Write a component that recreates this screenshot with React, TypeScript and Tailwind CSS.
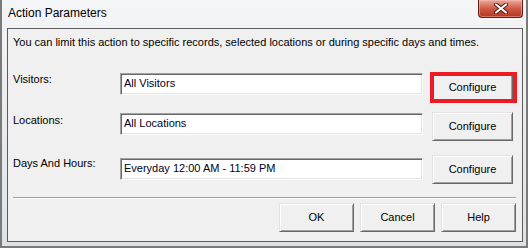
import React from 'react'

const btn =
  'flex items-center justify-center h-[29px] bg-[#f0f0f0] border border-t-[#e3e3e3] border-l-[#e3e3e3] border-b-[#696969] border-r-[#696969] shadow-[inset_1px_1px_0_#ffffff,inset_-1px_-1px_0_#a0a0a0] text-[11px] text-black'

const field =
  'w-[303px] h-[22px] bg-white border border-t-[#a0a0a0] border-l-[#a0a0a0] border-b-white border-r-white shadow-[inset_1px_1px_0_#696969,inset_-1px_-1px_0_#e3e3e3] pl-[3px] pt-[3px] text-[11px] leading-[13px] text-[#000022]'

const CloseButton = () => (
  <div className="w-[45px] h-[18px] rounded-b-[4px] border border-t-0 border-[#6a1d14] bg-gradient-to-b from-[#e9a89c] via-[#cf5a45] to-[#b3331f] shadow-[inset_0_0_0_1px_rgba(255,200,190,0.45)] flex items-center justify-center">
    <svg width="14" height="11" viewBox="0 0 14 11">
      <path d="M2 1.5 L12 9.5 M12 1.5 L2 9.5" stroke="#4a1a12" strokeWidth="4" strokeLinecap="round" />
      <path d="M2 1.5 L12 9.5 M12 1.5 L2 9.5" stroke="#ffffff" strokeWidth="2.2" strokeLinecap="round" />
    </svg>
  </div>
)

const rows = [
  { label: 'Visitors:', value: 'All Visitors', labelTop: 'mt-0', fieldTop: 'mt-0', mark: true, gap: 'mt-[24px]' },
  { label: 'Locations:', value: 'All Locations', labelTop: 'mt-[2px]', fieldTop: 'mt-[1px]', mark: false, gap: 'mt-[10px]' },
  { label: 'Days And Hours:', value: 'Everyday 12:00 AM - 11:59 PM', labelTop: 'mt-[2px]', fieldTop: 'mt-[3px]', mark: false, gap: 'mt-[14px]' },
]

const App = () => {
  return (
    <div
      className="w-[528px] h-[248px] flex flex-col bg-gradient-to-b from-[#f4f5f6] via-[#e9ebed] to-[#dfe2e5] border-l-2 border-r-2 border-b-2 border-[#7a7a7a]"
      style={{ fontFamily: '"Liberation Sans", Arial, sans-serif' }}
    >
      <div className="h-[28px] flex items-start justify-between shrink-0">
        <div className="pl-[6px] pt-[6px] text-[12px] leading-[15px] text-black">Action Parameters</div>
        <div className="mr-[3px]">
          <CloseButton />
        </div>
      </div>

      <div className="flex-1 ml-[5px] mr-[3px] mb-[4px] border border-[#5c5c5c] bg-[#f0f0f0] flex flex-col pl-[5px] pr-[6px]">
        <div className="pt-[7px] text-[11px] leading-[13px] text-black">
          You can limit this action to specific records, selected locations or during specific days and times.
        </div>

        {rows.map((row) => (
          <div key={row.label} className={`flex items-start ${row.gap}`}>
            <div className={`w-[107px] text-[11px] leading-[13px] text-black ${row.labelTop}`}>{row.label}</div>
            <div className={`${field} ${row.fieldTop}`}>{row.value}</div>
            <div className="relative ml-[9px]">
              <div className={`${btn} w-[81px]`}>Configure</div>
              {row.mark && (
                <div className="absolute -left-[2px] -right-[4px] -top-[1px] -bottom-[1px] border-[4px] border-[#ed1c24]" />
              )}
            </div>
          </div>
        ))}

        <div className="mt-[13px] h-[2px] border-t border-[#a0a0a0] border-b border-b-white" />

        <div className="mt-[4px] flex justify-end gap-[6px]">
          <div className={`${btn} w-[75px]`}>OK</div>
          <div className={`${btn} w-[75px]`}>Cancel</div>
          <div className={`${btn} w-[75px]`}>Help</div>
        </div>
      </div>
    </div>
  )
}

export default App
